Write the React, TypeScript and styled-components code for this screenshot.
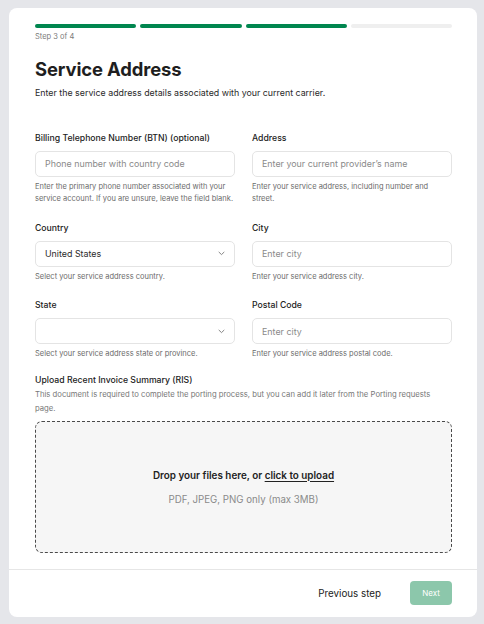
import React from "react";
import styled, { createGlobalStyle } from "styled-components";

const GlobalStyle = createGlobalStyle`
  * { box-sizing: border-box; }
  html, body { margin: 0; padding: 0; background: #e5e6ea; }
  body { font-family: "Inter", "Noto Sans", sans-serif; color: #1f1f22; -webkit-font-smoothing: antialiased; }
`;

const Page = styled.div`
  padding: 8px 7px 6px 9px;
`;

const Card = styled.div`
  background: #ffffff;
  border-radius: 8px;
  width: 468px;
  display: flex;
  flex-direction: column;
`;

const Body = styled.div`
  padding: 16px 25px 16px 26px;
`;

const Progress = styled.div`
  display: grid;
  grid-template-columns: repeat(4, 1fr);
  gap: 4px;
`;

const Segment = styled.div<{ $done: boolean }>`
  height: 3.5px;
  border-radius: 2px;
  background: ${(p) => (p.$done ? "#00864f" : "#efefef")};
`;

const StepText = styled.div`
  font-size: 7.5px;
  color: #7a7a7a;
  margin-top: 4px;
  line-height: 10px;
`;

const Title = styled.h1`
  font-size: 18.4px;
  font-weight: 700;
  margin: 15px 0 0;
  line-height: 24px;
  letter-spacing: -0.1px;
  color: #1e1e20;
`;

const Subtitle = styled.p`
  font-size: 8.85px;
  margin: 6px 0 0;
  line-height: 12px;
  color: #2a2a2a;
`;

const Grid = styled.div`
  display: grid;
  grid-template-columns: 1fr 1fr;
  column-gap: 17px;
  row-gap: 16px;
  margin-top: 33px;
`;

const Field = styled.div`
  display: flex;
  flex-direction: column;
`;

const Label = styled.label`
  display: block;
  font-size: 8.7px;
  line-height: 12px;
  color: #222;
  font-weight: 500;
`;

const InputBox = styled.div`
  margin-top: 7px;
  height: 26px;
  border: 1px solid #e4e4e4;
  border-radius: 5px;
  display: flex;
  align-items: center;
  justify-content: space-between;
  padding: 0 9px 0 9px;
  font-size: 8.9px;
`;

const Placeholder = styled.span`
  color: #8a8a8a;
`;

const Value = styled.span`
  color: #2a2a2a;
`;

const Help = styled.p`
  margin: 4px 0 0;
  font-size: 7.5px;
  line-height: 12.5px;
  color: #6b6b6b;
`;

const UploadSection = styled.div`
  margin-top: 13px;
`;

const UploadHelp = styled.p`
  margin: 2px 0 0;
  font-size: 7.7px;
  line-height: 14px;
  color: #777;
`;

const Dropzone = styled.div`
  margin-top: 5px;
  height: 132px;
  border: 1px dashed #4a4a4a;
  border-radius: 7px;
  background: #f6f6f6;
  display: flex;
  flex-direction: column;
  align-items: center;
  justify-content: center;
  gap: 13px;
`;

const DropTitle = styled.div`
  font-size: 9.9px;
  font-weight: 600;
  color: #222;
`;

const DropLink = styled.span`
  text-decoration: underline;
  text-underline-offset: 2px;
`;

const DropHint = styled.div`
  font-size: 9.7px;
  color: #8a8a8a;
`;

const Footer = styled.div`
  border-top: 1px solid #e6e6e6;
  height: 48px;
  display: flex;
  align-items: center;
  justify-content: flex-end;
  gap: 29px;
  padding: 0 25px 0 26px;
`;

const GhostButton = styled.button`
  background: none;
  border: none;
  font-family: inherit;
  font-size: 9.8px;
  color: #222;
  padding: 0;
  cursor: pointer;
`;

const PrimaryButton = styled.button<{ $disabled?: boolean }>`
  width: 42px;
  height: 24px;
  border: none;
  border-radius: 4px;
  background: ${(p) => (p.$disabled ? "#8cc7ab" : "#00864f")};
  color: #ffffff;
  font-family: inherit;
  font-size: 8px;
  cursor: pointer;
`;

const Chevron = () => (
  <svg width="7" height="5" viewBox="0 0 7 5" fill="none">
    <path d="M1 1.2 L3.5 3.6 L6 1.2" stroke="#777" strokeWidth="0.9" strokeLinecap="round" strokeLinejoin="round" />
  </svg>
);

type FieldDef = {
  label: string;
  placeholder?: string;
  value?: string;
  select?: boolean;
  help: string;
};

const fields: FieldDef[] = [
  {
    label: "Billing Telephone Number (BTN) (optional)",
    placeholder: "Phone number with country code",
    help: "Enter the primary phone number associated with your service account. If you are unsure, leave the field blank.",
  },
  {
    label: "Address",
    placeholder: "Enter your current provider’s name",
    help: "Enter your service address, including number and street.",
  },
  {
    label: "Country",
    value: "United States",
    select: true,
    help: "Select your service address country.",
  },
  { label: "City", placeholder: "Enter city", help: "Enter your service address city." },
  { label: "State", select: true, help: "Select your service address state or province." },
  { label: "Postal Code", placeholder: "Enter city", help: "Enter your service address postal code." },
];

export default function App() {
  return (
    <>
      <GlobalStyle />
      <Page>
        <Card>
          <Body>
            <Progress>
              {[true, true, true, false].map((d, i) => (
                <Segment key={i} $done={d} />
              ))}
            </Progress>
            <StepText>Step 3 of 4</StepText>
            <Title>Service Address</Title>
            <Subtitle>Enter the service address details associated with your current carrier.</Subtitle>
            <Grid>
              {fields.map((f) => (
                <Field key={f.label}>
                  <Label>{f.label}</Label>
                  <InputBox>
                    {f.value ? <Value>{f.value}</Value> : f.placeholder ? <Placeholder>{f.placeholder}</Placeholder> : <span />}
                    {f.select && <Chevron />}
                  </InputBox>
                  <Help>{f.help}</Help>
                </Field>
              ))}
            </Grid>
            <UploadSection>
              <Label>Upload Recent Invoice Summary (RIS)</Label>
              <UploadHelp>
                This document is required to complete the porting process, but you can add it later from the Porting requests page.
              </UploadHelp>
              <Dropzone>
                <DropTitle>
                  Drop your files here, or <DropLink>click to upload</DropLink>
                </DropTitle>
                <DropHint>PDF, JPEG, PNG only (max 3MB)</DropHint>
              </Dropzone>
            </UploadSection>
          </Body>
          <Footer>
            <GhostButton>Previous step</GhostButton>
            <PrimaryButton $disabled>Next</PrimaryButton>
          </Footer>
        </Card>
      </Page>
    </>
  );
}
